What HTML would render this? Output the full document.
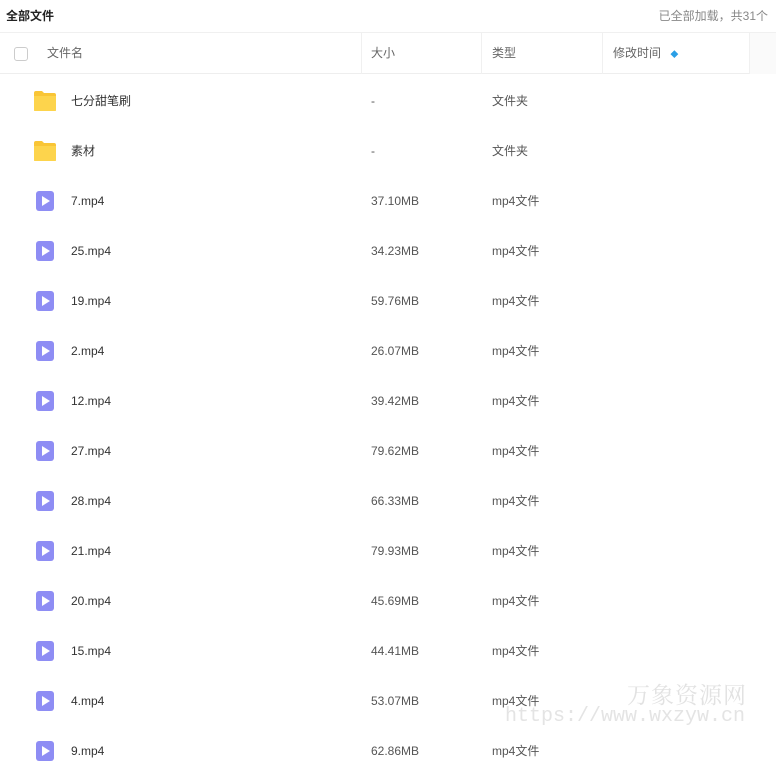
<!DOCTYPE html>
<html><head><meta charset="utf-8"><style>
*{margin:0;padding:0;box-sizing:border-box}
body{width:776px;height:752px;overflow:hidden;background:#fff;font-family:"Liberation Sans","Noto Sans CJK SC",sans-serif;font-size:12px;color:#333;position:relative}
.top{height:33px;border-bottom:1px solid #f0f0f0;position:relative}
.top b{position:absolute;left:6px;top:7px;font-size:12px;color:#222}
.top span{position:absolute;right:8px;top:7px;color:#888}
.hd{height:41px;border-bottom:1px solid #eee;position:relative;color:#666}
.hd div{position:absolute;top:0;height:41px;line-height:41px}
.sep{border-left:1px solid #f0f0f0}
.cb{position:absolute;left:14px;top:14px;width:14px;height:14px;border:1px solid #ccc;border-radius:3px}
.rows{padding-top:2px}
.row{height:50px;position:relative}
.row div{position:absolute;top:0;line-height:50px}
.n{left:71px}.s{left:371px;color:#555}.t{left:492px;color:#555}
.fold{position:absolute;left:33px;top:14px;width:24px;height:22px}
.vid{position:absolute;left:36px;top:15px;width:18px;height:20px;background:#8e8df4;border-radius:3px}
.vid:after{content:"";position:absolute;left:6px;top:5px;border-left:8px solid #fff;border-top:5px solid transparent;border-bottom:5px solid transparent}
.wm1{position:absolute;left:627px;top:677px;font-size:23px;color:#e2e2e2;letter-spacing:1px;font-family:"Noto Serif CJK SC",serif}
.wm2{position:absolute;left:505px;top:705px;font-size:20px;color:#e4e4e4;font-family:"Liberation Mono",monospace;letter-spacing:0}
</style></head><body>
<div class="top"><b>全部文件</b><span>已全部加载，共31个</span></div>
<div class="hd"><span class="cb"></span>
<div style="left:47px">文件名</div>
<div class="sep" style="left:361px;width:120px;padding-left:9px">大小</div>
<div class="sep" style="left:481px;width:121px;padding-left:10px">类型</div>
<div class="sep" style="left:602px;width:147px;padding-left:10px">修改时间 <span style="color:#2a9fe6;font-size:8px;margin-left:6px">&#9670;</span></div>
<div class="sep" style="left:749px;width:27px;background:#fafafa"></div>
</div>
<div class="rows">
<div class="row"><svg class="fold" viewBox="0 0 24 22"><path d="M1 3q0-2 2-2h6l2 2h10q2 0 2 2v15q0 1-1 1H2q-1 0-1-1z" fill="#f9c536"/><path d="M1 6h22v14q0 1-1 1H2q-1 0-1-1z" fill="#fdd44c"/></svg><div class="n">七分甜笔刷</div><div class="s">-</div><div class="t">文件夹</div></div>
<div class="row"><svg class="fold" viewBox="0 0 24 22"><path d="M1 3q0-2 2-2h6l2 2h10q2 0 2 2v15q0 1-1 1H2q-1 0-1-1z" fill="#f9c536"/><path d="M1 6h22v14q0 1-1 1H2q-1 0-1-1z" fill="#fdd44c"/></svg><div class="n">素材</div><div class="s">-</div><div class="t">文件夹</div></div>
<div class="row"><span class="vid"></span><div class="n">7.mp4</div><div class="s">37.10MB</div><div class="t">mp4文件</div></div>
<div class="row"><span class="vid"></span><div class="n">25.mp4</div><div class="s">34.23MB</div><div class="t">mp4文件</div></div>
<div class="row"><span class="vid"></span><div class="n">19.mp4</div><div class="s">59.76MB</div><div class="t">mp4文件</div></div>
<div class="row"><span class="vid"></span><div class="n">2.mp4</div><div class="s">26.07MB</div><div class="t">mp4文件</div></div>
<div class="row"><span class="vid"></span><div class="n">12.mp4</div><div class="s">39.42MB</div><div class="t">mp4文件</div></div>
<div class="row"><span class="vid"></span><div class="n">27.mp4</div><div class="s">79.62MB</div><div class="t">mp4文件</div></div>
<div class="row"><span class="vid"></span><div class="n">28.mp4</div><div class="s">66.33MB</div><div class="t">mp4文件</div></div>
<div class="row"><span class="vid"></span><div class="n">21.mp4</div><div class="s">79.93MB</div><div class="t">mp4文件</div></div>
<div class="row"><span class="vid"></span><div class="n">20.mp4</div><div class="s">45.69MB</div><div class="t">mp4文件</div></div>
<div class="row"><span class="vid"></span><div class="n">15.mp4</div><div class="s">44.41MB</div><div class="t">mp4文件</div></div>
<div class="row"><span class="vid"></span><div class="n">4.mp4</div><div class="s">53.07MB</div><div class="t">mp4文件</div></div>
<div class="row"><span class="vid"></span><div class="n">9.mp4</div><div class="s">62.86MB</div><div class="t">mp4文件</div></div>
</div>
<div class="wm1">万象资源网</div>
<div class="wm2">https://www.wxzyw.cn</div>
</body></html>
